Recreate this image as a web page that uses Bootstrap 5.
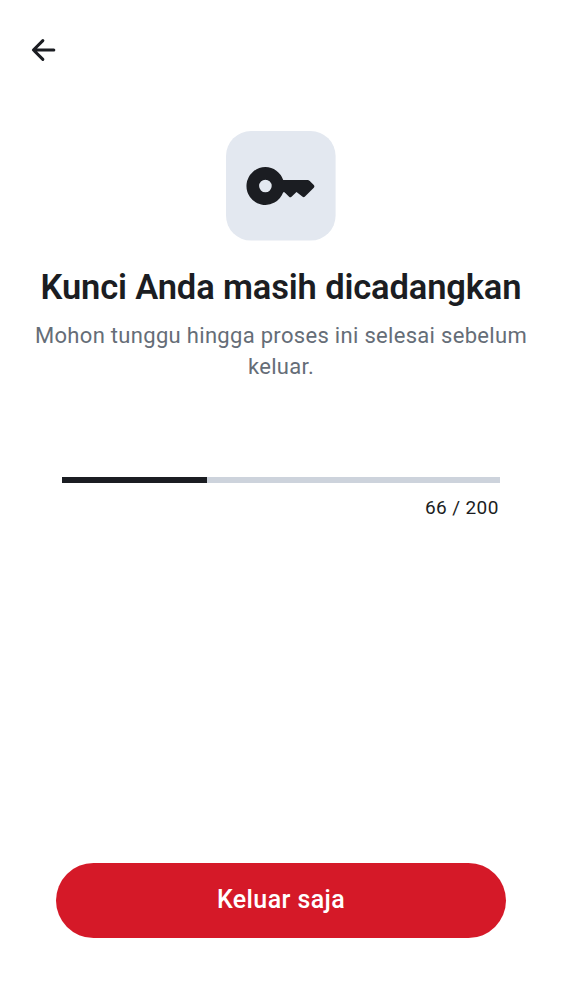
<!DOCTYPE html>
<html lang="id">
<head>
<meta charset="utf-8">
<meta name="viewport" content="width=device-width, initial-scale=1">
<title>Keluar</title>
<link rel="stylesheet" href="https://cdn.jsdelivr.net/npm/bootstrap@5.3.0/dist/css/bootstrap.min.css">
<style>
body{font-family:Roboto,sans-serif;color:#1b1d22;background:#fff}
.topbar{height:100px;padding-left:28px}
.back{width:31px;height:31px}
.key-tile{width:110px;height:110px;margin-top:31px;border-radius:25px}
.headline{font-size:34.5px;line-height:44px;font-weight:600;letter-spacing:-.14px;margin:24px 0 0;white-space:nowrap}
.hint{font-size:22px;line-height:31px;letter-spacing:.31px;color:#656d77;width:500px;margin:11px 0 0}
.backup{width:437.5px;margin-top:95px}
.backup .progress{height:6px;background:#cdd3dc}
.backup .progress-bar{background:#1b1d22}
.count{font-size:19px;line-height:28px;letter-spacing:.4px;margin-top:11px;padding-right:1px}
.leave{width:450px;height:75px;font-size:25px;font-weight:500;letter-spacing:.4px;margin-bottom:62.5px;background:#d51928;color:#fff}
.leave:hover{background:#b91522;color:#fff}
</style>
</head>
<body>
<div class="vh-100 d-flex flex-column">
<header class="topbar d-flex align-items-center flex-shrink-0">
<button class="btn p-0 border-0 d-flex" aria-label="Kembali"><svg class="back" viewBox="0 0 24 24" fill="none" stroke="#1b1d22" stroke-width="2.35" stroke-linecap="round" stroke-linejoin="round"><path d="M20 11.6H4.4M11.5 4.3 4.2 11.6l7.3 7.3"/></svg></button>
</header>
<main class="d-flex flex-column align-items-center flex-grow-1 text-center">
<div class="key-tile d-flex"><svg width="110" height="110" viewBox="226 131 110 110" fill="#1b1d22"><rect x="226" y="131" width="109.6" height="109.6" rx="25" fill="#e3e8f0"/><path fill-rule="evenodd" d="M265.4 167.1a18.9 18.9 0 1 0 17.8 25.2h1.3l4.6 4.4q1.2 1.2 2.4 0l5-4.7 6.1 4.8q1.2.9 2.4-.2l8.8-8.9q1.2-1.4 0-2.8l-4.3-4.2q-.8-.7-1.8-.7h-24.5a18.9 18.9 0 0 0-17.8-12.9Zm0 12.6a6.3 6.3 0 1 1 0 12.6 6.3 6.3 0 0 1 0-12.6Z"/></svg></div>
<h1 class="headline">Kunci Anda masih dicadangkan</h1>
<p class="hint">Mohon tunggu hingga proses ini selesai sebelum keluar.</p>
<div class="backup">
<div class="progress rounded-0" role="progressbar" aria-valuenow="66" aria-valuemin="0" aria-valuemax="200"><div class="progress-bar" style="width:33%"></div></div>
<div class="count text-end">66 / 200</div>
</div>
</main>
<footer class="d-flex justify-content-center"><button class="leave btn border-0 rounded-pill">Keluar saja</button></footer>
</div>
<script src="https://cdn.jsdelivr.net/npm/bootstrap@5.3.0/dist/js/bootstrap.bundle.min.js"></script>
</body>
</html>
